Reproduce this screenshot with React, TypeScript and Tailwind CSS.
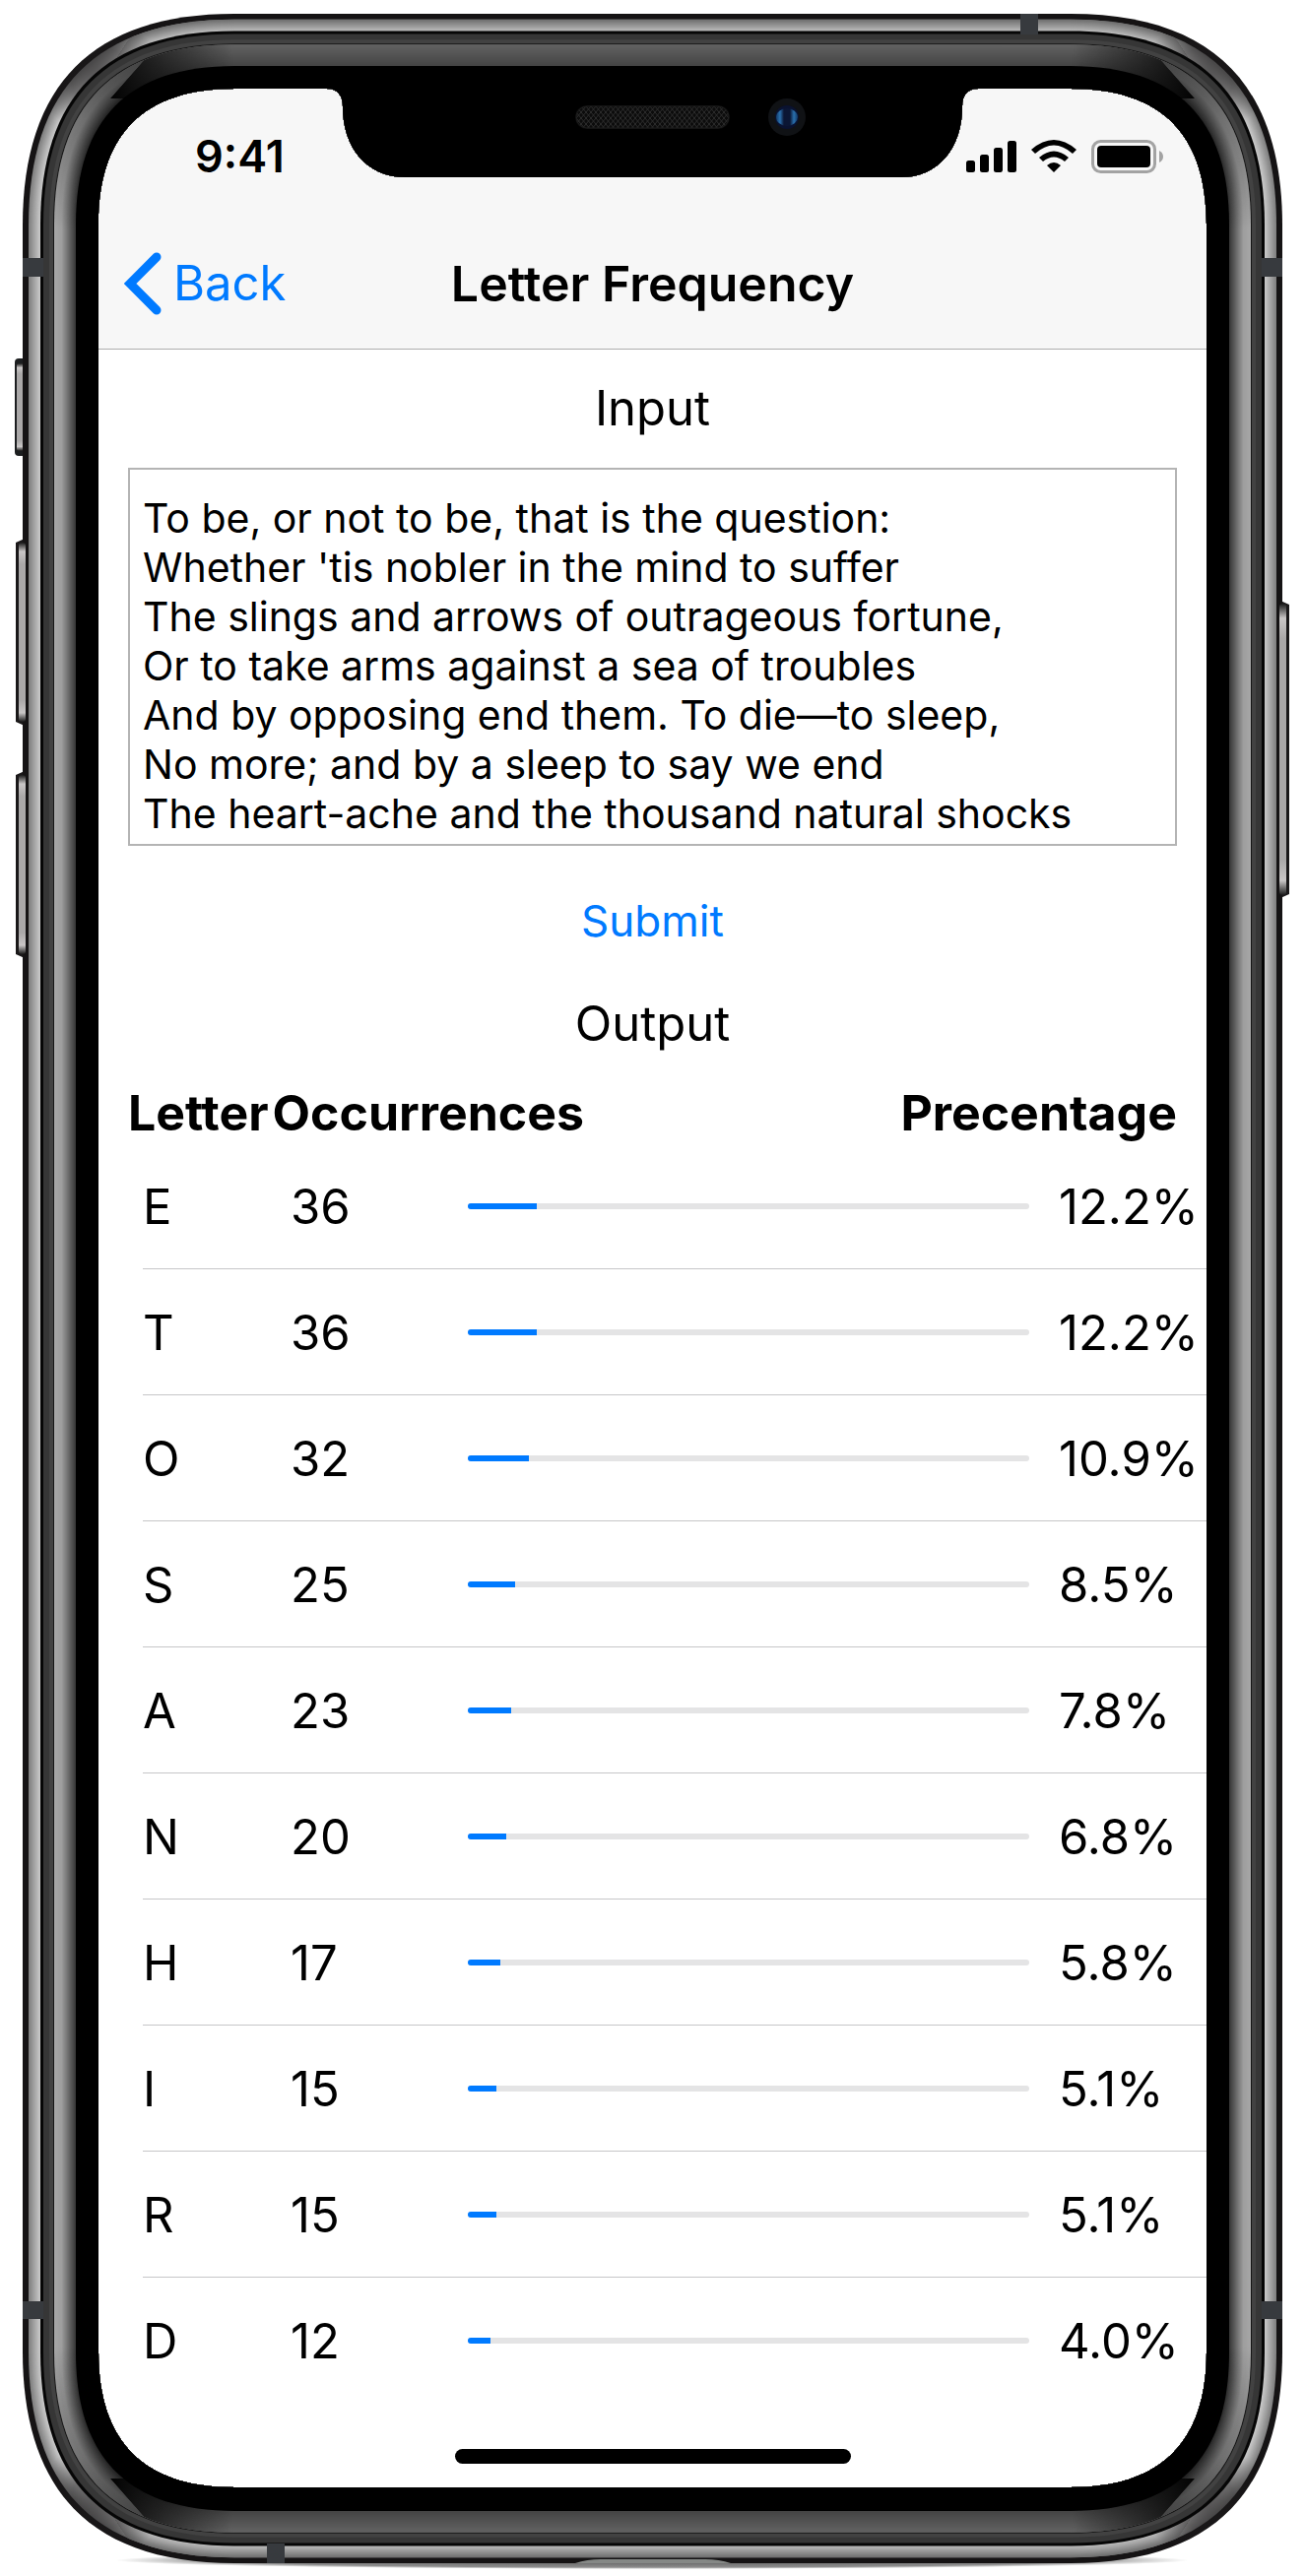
import { useState } from "react";

type Row = { letter: string; count: number; percent: number };

const rows: Row[] = [
  { letter: "E", count: 36, percent: 12.2 },
  { letter: "T", count: 36, percent: 12.2 },
  { letter: "O", count: 32, percent: 10.9 },
  { letter: "S", count: 25, percent: 8.5 },
  { letter: "A", count: 23, percent: 7.8 },
  { letter: "N", count: 20, percent: 6.8 },
  { letter: "H", count: 17, percent: 5.8 },
  { letter: "I", count: 15, percent: 5.1 },
  { letter: "R", count: 15, percent: 5.1 },
  { letter: "D", count: 12, percent: 4.0 },
];

const soliloquy = `To be, or not to be, that is the question:
Whether 'tis nobler in the mind to suffer
The slings and arrows of outrageous fortune,
Or to take arms against a sea of troubles
And by opposing end them. To die—to sleep,
No more; and by a sleep to say we end
The heart-ache and the thousand natural shocks`;

/* Outline of the device body, moved inwards by `inset`, with continuous corners. */
function bodyPath(inset: number) {
  const l = 23 + inset;
  const r = 1302 - inset;
  const t = 14 + inset - Math.min(1, inset / 40);
  const b = 2603 - inset + Math.min(1, inset / 40);
  const e = 215 - inset;
  const k = e / 3;
  return `M${l + e} ${t}H${r - e}C${r - k} ${t} ${r} ${t + k} ${r} ${t + e}V${b - e}C${r} ${b - k} ${r - k} ${b} ${r - e} ${b}H${l + e}C${l + k} ${b} ${l} ${b - k} ${l} ${b - e}V${t + e}C${l} ${t + k} ${l + k} ${t} ${l + e} ${t}Z`;
}

const screenPath =
  "M238 90H332C343 90 348 97 348 108C348 150 372 180 412 180H915C953 180 977 150 977 108C977 97 982 90 993 90H1087C1179 90 1225 136 1225 228V2388C1225 2480 1179 2526 1087 2526H238C146 2526 100 2480 100 2388V228C100 136 146 90 238 90Z";

function mix(from: number, to: number, f: number) {
  const v = Math.round(from + (to - from) * f);
  return `rgb(${v},${v},${v})`;
}

const bandSteps = Array.from({ length: 12 }, (_, i) => i);
const rimSteps = Array.from({ length: 22 }, (_, i) => i);

const corners = [
  { x: 104, y: 80 },
  { x: 1221, y: 80 },
  { x: 104, y: 2537 },
  { x: 1221, y: 2537 },
];

function PhoneFrame() {
  return (
    <svg
      aria-hidden="true"
      className="pointer-events-none absolute inset-0 h-full w-full"
      viewBox="0 0 1325 2616"
      preserveAspectRatio="none"
    >
      <defs>
        <clipPath id="device">
          <path d={bodyPath(0)} />
        </clipPath>
        <clipPath id="glass">
          <path clipRule="evenodd" d={`M0 0H1325V2616H0Z${screenPath}`} />
        </clipPath>
        <clipPath id="ends">
          <path d="M170 34L112 100H1213L1155 34ZM170 2583L112 2517H1213L1155 2583Z" />
        </clipPath>
        <clipPath id="caps">
          <path d="M150 10L80 120H1245L1175 10ZM150 2610L80 2500H1245L1175 2610Z" />
        </clipPath>
        <radialGradient id="cornerShade">
          <stop offset="0" stopColor="#1c1a1b" stopOpacity="0.7" />
          <stop offset="0.5" stopColor="#1c1a1b" stopOpacity="0.5" />
          <stop offset="1" stopColor="#1c1a1b" stopOpacity="0" />
        </radialGradient>
        <linearGradient id="sideFade" gradientUnits="userSpaceOnUse" x1="0" x2="0" y1="60" y2="2557">
          <stop offset="0" stopColor="#000" stopOpacity="0.6" />
          <stop offset="0.025" stopColor="#000" stopOpacity="0.3" />
          <stop offset="0.07" stopColor="#000" stopOpacity="0" />
          <stop offset="0.93" stopColor="#000" stopOpacity="0" />
          <stop offset="0.975" stopColor="#000" stopOpacity="0.3" />
          <stop offset="1" stopColor="#000" stopOpacity="0.6" />
        </linearGradient>
        <linearGradient id="endFade" gradientUnits="userSpaceOnUse" x1="115" x2="1210" y1="0" y2="0">
          <stop offset="0" stopColor="#000" stopOpacity="0.95" />
          <stop offset="0.03" stopColor="#000" stopOpacity="0.7" />
          <stop offset="0.11" stopColor="#000" stopOpacity="0" />
          <stop offset="0.89" stopColor="#000" stopOpacity="0" />
          <stop offset="0.97" stopColor="#000" stopOpacity="0.7" />
          <stop offset="1" stopColor="#000" stopOpacity="0.95" />
        </linearGradient>
        <linearGradient id="buttonEnds" x1="0" x2="0" y1="0" y2="1">
          <stop offset="0" stopColor="#1a1a1a" />
          <stop offset="0.05" stopColor="#c9c6c6" />
          <stop offset="0.12" stopColor="#aaa8a8" />
          <stop offset="0.88" stopColor="#aaa8a8" />
          <stop offset="0.95" stopColor="#c9c6c6" />
          <stop offset="1" stopColor="#1a1a1a" />
        </linearGradient>
        <radialGradient id="groundShadow">
          <stop offset="0" stopColor="#000" stopOpacity="0.65" />
          <stop offset="0.8" stopColor="#000" stopOpacity="0.45" />
          <stop offset="1" stopColor="#000" stopOpacity="0" />
        </radialGradient>
        <pattern id="mesh" width="5" height="6" patternUnits="userSpaceOnUse">
          <path d="M0 0L5 6M5 0L0 6" stroke="#2c2c2c" strokeWidth="1" />
        </pattern>
        <linearGradient id="lens" x1="0" x2="1" y1="0" y2="0">
          <stop offset="0" stopColor="#123a66" />
          <stop offset="0.18" stopColor="#2a70ae" />
          <stop offset="0.36" stopColor="#0b1634" />
          <stop offset="0.64" stopColor="#0b1634" />
          <stop offset="0.82" stopColor="#2a70ae" />
          <stop offset="1" stopColor="#123a66" />
        </linearGradient>
      </defs>

      <g clipPath="url(#glass)">
        <ellipse cx="662" cy="2600" rx="545" ry="9" fill="url(#groundShadow)" />

        {/* Side buttons */}
        <rect x="15" y="364" width="14" height="99" rx="4" fill="#1c1e20" />
        <rect x="17" y="369" width="8" height="89" rx="2" fill="url(#buttonEnds)" />
        <path d="M25 547L16 551V733L25 737ZM25 783L16 787V969L25 973ZM1300 610L1309 614V908L1300 912Z" fill="#1a1819" />

        <path d={bodyPath(0)} fill="#151314" />
        {bandSteps.map((i) => (
          <path key={i} d={bodyPath(6 + i)} fill={mix(128, 200, i / 11)} />
        ))}
        <g clipPath="url(#caps)">
          {bandSteps.map((i) => (
            <path key={i} d={bodyPath(6 + i)} fill={mix(112, 184, i / 11)} />
          ))}
        </g>
        <g clipPath="url(#device)">
          {corners.map((c) => (
            <circle key={`${c.x}-${c.y}`} cx={c.x} cy={c.y} r="62" fill="url(#cornerShade)" />
          ))}
        </g>
        <path d={bodyPath(18)} fill="#060606" />
        <path d={bodyPath(21)} fill="#363636" />
        <path d={bodyPath(27)} fill="#424242" />
        <path d={bodyPath(31)} fill="#151515" />
        {rimSteps.map((i) => (
          <path key={i} d={bodyPath(32 + i)} fill={i < 7 ? mix(166, 158, i / 7) : mix(158, 56, (i - 7) / 14)} />
        ))}
        <path d={bodyPath(32)} fill="url(#sideFade)" />
        <g clipPath="url(#ends)">
          {rimSteps.map((i) => (
            <path key={i} d={bodyPath(32 + i)} fill={mix(98, 68, i / 21)} />
          ))}
          <path d={bodyPath(32)} fill="url(#endFade)" />
        </g>
        <path d={bodyPath(54)} fill="#000" />

        {/* Volume and power key faces */}
        <rect x="19" y="551" width="7" height="182" rx="3" fill="url(#buttonEnds)" />
        <rect x="19" y="787" width="7" height="182" rx="3" fill="url(#buttonEnds)" />
        <rect x="1299" y="613" width="7" height="296" rx="3" fill="url(#buttonEnds)" />

        {/* Antenna lines */}
        <g fill="#373a3e">
          <rect x="23" y="262" width="21" height="19" />
          <rect x="1281" y="262" width="21" height="19" />
          <rect x="23" y="2337" width="21" height="18" />
          <rect x="1281" y="2337" width="21" height="18" />
          <rect x="1036" y="14" width="18" height="21" />
          <rect x="271" y="2583" width="18" height="20" />
        </g>

        {/* Opening lip on the bottom edge */}
        <path d="M584 2603Q596 2599 610 2599H716Q730 2599 742 2603Z" fill="#858886" />
      </g>

      {/* Earpiece and camera */}
      <rect x="584" y="107" width="157" height="24" rx="12" fill="#0c0c0c" />
      <rect x="585" y="108" width="155" height="22" rx="11" fill="url(#mesh)" stroke="#1c1c1c" />
      <circle cx="799" cy="119" r="19" fill="#101215" />
      <circle cx="799" cy="119" r="12" fill="#0a1230" />
      <ellipse cx="799" cy="119" rx="11" ry="9" fill="url(#lens)" />
    </svg>
  );
}

function StatusIcons() {
  return (
    <svg aria-hidden="true" width="200" height="34" viewBox="0 0 200 34" className="block">
      <rect x="0" y="21" width="9" height="12" rx="2.5" />
      <rect x="14" y="15" width="9" height="18" rx="2.5" />
      <rect x="28" y="8" width="9" height="25" rx="2.5" />
      <rect x="42" y="1" width="9" height="32" rx="2.5" />
      <path d="M66 10Q89 -10 112 10L108 14Q89 -3 70 14Z" />
      <path d="M74 18Q89 5 104 18L100 22Q89 13 78 22Z" />
      <path d="M82 26Q89 20 96 26L89 33Z" />
      <rect x="128.500" y="1.500" width="63" height="31" rx="8" fill="none" stroke="#a3a3a3" strokeWidth="3" />
      <rect x="133" y="6" width="54" height="22" rx="4" />
      <path d="M196 11Q200 13 200 17T196 23Z" fill="#a3a3a3" />
    </svg>
  );
}

export default function App() {
  const [text, setText] = useState(soliloquy);

  return (
    <div className="bg-white font-[Inter,'Liberation_Sans',sans-serif] text-black">
      <div className="relative mx-auto max-w-[1325px] px-[100px] pt-[90px] pb-[90px]">
        <main className="flex flex-col bg-white">
          <header className="flex flex-col border-b border-[#adadad] bg-[#f7f7f7]">
            <div className="flex h-[132px] items-center justify-between pt-1.5 pr-11 pl-[98px]">
              <time className="text-[45px] leading-[56px] font-semibold">9:41</time>
              <StatusIcons />
            </div>
            <div className="grid h-[132px] grid-cols-[1fr_auto_1fr] items-center px-[26px]">
              <button type="button" className="flex items-center gap-3 justify-self-start text-[49px] leading-[60px] text-[#007aff]">
                <svg aria-hidden="true" width="38" height="64" viewBox="0 0 38 64">
                  <path d="M33 5L6 32L33 59" fill="none" stroke="currentColor" strokeWidth="9" strokeLinecap="round" strokeLinejoin="miter" />
                </svg>
                Back
              </button>
              <h1 className="text-[50px] leading-[60px] font-semibold">Letter Frequency</h1>
            </div>
          </header>

          <div className="flex flex-col px-[30px] pt-[30px]">
            <label htmlFor="input-text" className="text-center text-[49px] leading-[60px]">
              Input
            </label>
            <textarea
              id="input-text"
              value={text}
              onChange={(e) => setText(e.target.value)}
              rows={7}
              spellCheck={false}
              className="mt-[30px] block h-[384px] resize-none overflow-hidden border-2 border-[#b4b4b4] px-[13px] pt-6 text-[41px] leading-[50px] outline-none"
            />
            <button type="button" className="mt-[46px] self-center text-[44px] leading-[60px] text-[#007aff]">
              Submit
            </button>
            <h2 className="mt-[45px] text-center text-[49px] leading-[60px]">Output</h2>
          </div>

          <table className="mt-[30px] block">
            <thead className="block px-[30px]">
              <tr className="flex gap-1 text-[50px] leading-[60px] font-bold">
                <th scope="col">Letter</th>
                <th scope="col">Occurrences</th>
                <th scope="col" className="ml-auto">Precentage</th>
              </tr>
            </thead>
            <tbody className="block pt-px pl-[45px]">
              {rows.map((row) => (
                <tr
                  key={row.letter}
                  className="flex h-32 items-center border-b border-[#c6c6c8] text-[49px] leading-[60px] last:border-transparent"
                >
                  <td className="w-[150px] pt-0.5">{row.letter}</td>
                  <td className="w-[180px] pt-0.5">{row.count}</td>
                  <td className="flex-1">
                    <div
                      role="progressbar"
                      aria-label={`${row.letter} share`}
                      aria-valuenow={row.percent}
                      className="h-1.5 overflow-hidden rounded-full bg-[#e4e4e5]"
                    >
                      <div className="h-full bg-[#007aff]" style={{ width: `${row.percent}%` }} />
                    </div>
                  </td>
                  <td className="w-[180px] pt-0.5 pl-[30px] whitespace-nowrap">{row.percent.toFixed(1)}%</td>
                </tr>
              ))}
            </tbody>
          </table>

          <footer className="flex justify-center pt-[46px] pb-6">
            <div className="h-[15px] w-[402px] rounded-full bg-black" />
          </footer>
        </main>
        <PhoneFrame />
      </div>
    </div>
  );
}
